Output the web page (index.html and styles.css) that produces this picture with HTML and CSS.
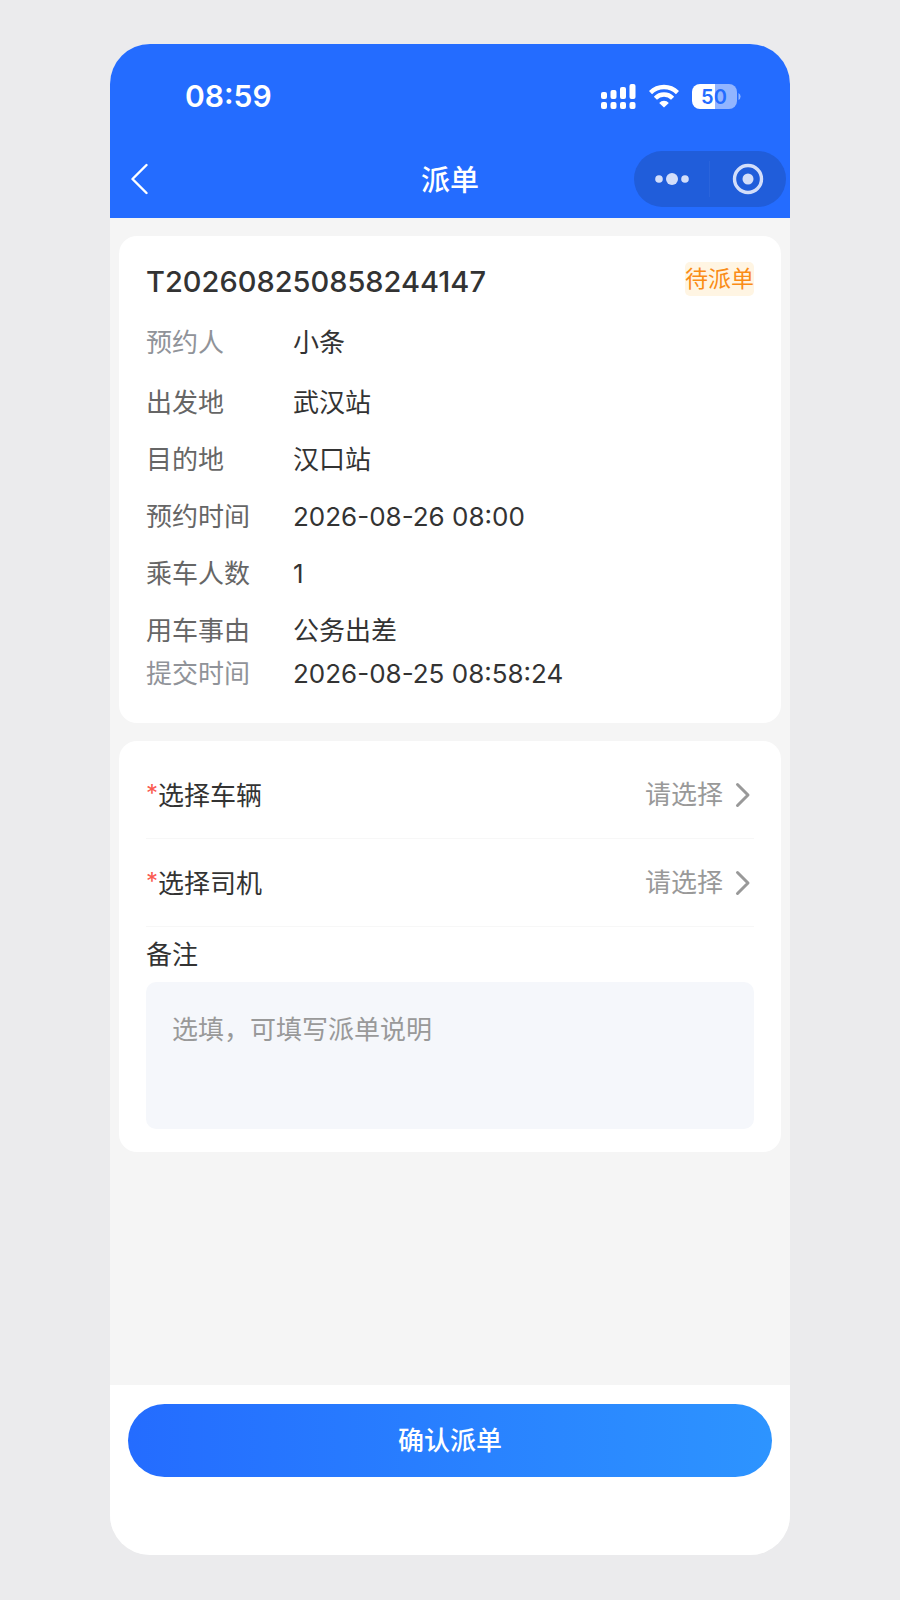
FILE: index.html
```html
<!doctype html>
<html lang="zh-CN">
<head>
  <meta charset="UTF-8">
  <title>派单</title>
  <meta name="viewport" content="width=device-width, initial-scale=1.0">
  <link rel="stylesheet" href="styles.css">
</head>
<body>

  <div class="phone">
    <header class="header">
      <div class="status-bar">
        <span class="time">08:59</span>
        <div class="status-icons">
          <svg width="35" height="25" viewBox="0 0 35 25" fill="#fff" aria-hidden="true">
            <rect x="0" y="8" width="6" height="7" rx="2"/>
            <rect x="9.5" y="6" width="6" height="9" rx="2"/>
            <rect x="19" y="3" width="6" height="12" rx="2"/>
            <rect x="28.5" y="0" width="6" height="15" rx="2"/>
            <rect x="0" y="18" width="6" height="7" rx="2"/>
            <rect x="9.5" y="18" width="6" height="7" rx="2"/>
            <rect x="19" y="18" width="6" height="7" rx="2"/>
            <rect x="28.5" y="18" width="6" height="7" rx="2"/>
          </svg>
          <svg width="30" height="24" viewBox="0 0 30 24" aria-hidden="true">
            <g fill="none" stroke="#fff" stroke-width="4.4">
              <path d="M1.5 8.6A19.2 19.2 0 0 1 28.5 8.6"/>
              <path d="M6.4 14.2A12 12 0 0 1 23.6 14.2"/>
            </g>
            <path d="M15 23.5l-4.8-4.6a6.6 6.6 0 0 1 9.6 0z" fill="#fff"/>
          </svg>
          <svg width="50" height="25" viewBox="0 0 50 25" aria-hidden="true">
            <path d="M8 0h15v25H8a8 8 0 0 1-8-8V8a8 8 0 0 1 8-8z" fill="#fff"/>
            <path d="M23 0h14a8 8 0 0 1 8 8v9a8 8 0 0 1-8 8H23z" fill="#92b5ff"/>
            <path d="M46.5 9a4 4 0 0 1 0 7z" fill="#92b5ff"/>
            <text class="battery-text" x="22" y="20" text-anchor="middle">50</text>
          </svg>
        </div>
      </div>
      <div class="nav-bar">
        <button class="back" type="button" aria-label="返回">
          <svg width="18" height="32" viewBox="0 0 18 32" fill="none" stroke="#fff" stroke-width="2.4" stroke-linecap="round" stroke-linejoin="round">
            <path d="M15.500 2L1.500 16l14 14"/>
          </svg>
        </button>
        <h1>派单</h1>
        <div class="capsule">
          <button type="button" aria-label="更多">
            <svg width="34" height="14" viewBox="0 0 34 14" fill="#d3defa">
              <circle cx="4" cy="7" r="3.8"/>
              <circle cx="17" cy="7" r="6"/>
              <circle cx="30" cy="7" r="3.8"/>
            </svg>
          </button>
          <button type="button" aria-label="关闭">
            <svg width="32" height="32" viewBox="0 0 32 32">
              <circle cx="16" cy="16" r="13.5" fill="none" stroke="#d3defa" stroke-width="3.4"/>
              <circle cx="16" cy="16" r="5.5" fill="#d3defa"/>
            </svg>
          </button>
        </div>
      </div>
    </header>

    <main class="content">
      <section class="card order">
        <div class="order-head">
          <h2>T202608250858244147</h2>
          <span class="tag">待派单</span>
        </div>
        <dl class="info">
          <div class="meta"><dt>预约人</dt><dd>小条</dd></div>
          <div class="row"><dt>出发地</dt><dd>武汉站</dd></div>
          <div class="row"><dt>目的地</dt><dd>汉口站</dd></div>
          <div class="row"><dt>预约时间</dt><dd>2026-08-26 08:00</dd></div>
          <div class="row"><dt>乘车人数</dt><dd>1</dd></div>
          <div class="row"><dt>用车事由</dt><dd>公务出差</dd></div>
          <div class="meta"><dt>提交时间</dt><dd>2026-08-25 08:58:24</dd></div>
        </dl>
      </section>

      <form class="card form" id="dispatch">
        <div class="field">
          <label for="car"><span class="required">*</span>选择车辆</label>
          <select id="car"><option>请选择</option></select>
          <svg class="arrow" width="16" height="26" viewBox="0 0 16 26" aria-hidden="true"><path d="M2.500 2.500L13 13 2.500 23.500"/></svg>
        </div>
        <div class="field">
          <label for="driver"><span class="required">*</span>选择司机</label>
          <select id="driver"><option>请选择</option></select>
          <svg class="arrow" width="16" height="26" viewBox="0 0 16 26" aria-hidden="true"><path d="M2.500 2.500L13 13 2.500 23.500"/></svg>
        </div>
        <label class="remark-label" for="remark">备注</label>
        <textarea id="remark" placeholder="选填，可填写派单说明"></textarea>
      </form>
    </main>

    <footer class="footer">
      <button class="submit" type="submit" form="dispatch">确认派单</button>
    </footer>
  </div>

</body>
</html>
```
FILE: styles.css
```css
* {
  box-sizing: border-box;
}
body {
  display: flex;
  min-height: 100vh;
  margin: 0;
  padding: 44px 110px 45px;
  background: #ebebed;
  color: #333;
  font-family: Inter, "Noto Sans CJK SC", sans-serif;
  font-size: 26px;
  line-height: 36px;
}
h1, h2, dl, dd {
  margin: 0;
}
button, select, textarea {
  margin: 0;
  padding: 0;
  border: 0;
  background: none;
  font: inherit;
}
svg {
  display: block;
}

.phone {
  display: flex;
  flex: 1;
  flex-direction: column;
  min-width: 0;
  border-radius: 40px;
  background: #f5f5f5;
  overflow: hidden;
}

/* header */
.header {
  background: #246cff;
  color: #fff;
}
.status-bar {
  display: flex;
  justify-content: space-between;
  align-items: center;
  height: 104px;
  padding: 0 48px 0 75px;
}
.time {
  font-size: 30px;
  font-weight: 600;
}
.status-icons {
  display: flex;
  align-items: center;
  gap: 13px;
}
.battery-text {
  fill: #246cff;
  font-size: 20px;
  font-weight: 600;
}
.nav-bar {
  display: grid;
  grid-template-columns: 1fr auto 1fr;
  align-items: center;
  height: 70px;
  padding: 0 4px 8px;
}
.nav-bar h1 {
  padding-top: 4px;
  font-size: 29px;
  font-weight: 500;
}
.back {
  justify-self: start;
  margin-left: 17px;
}
.capsule {
  display: grid;
  grid-template-columns: 1fr 1fr;
  justify-self: end;
  align-items: center;
  width: 152px;
  height: 56px;
  border-radius: 28px;
  background: #205dda;
}
.capsule button {
  display: flex;
  justify-content: center;
  align-items: center;
  height: 36px;
}
.capsule button:first-child {
  border-right: 1px solid #2a64dc;
}

/* cards */
.content {
  display: flex;
  flex: 1;
  flex-direction: column;
  gap: 18px;
  padding: 18px 9px;
}
.card {
  border-radius: 18px;
  background: #fff;
}
.order {
  padding: 26px 27px 31px;
}
.order-head {
  display: flex;
  justify-content: space-between;
  align-items: flex-start;
  margin-bottom: 23px;
}
.order-head h2 {
  font-size: 29px;
  font-weight: 500;
  line-height: 40px;
}
.tag {
  border-radius: 5px;
  background: #fff5e3;
  color: #fa8c16;
  font-size: 23px;
  line-height: 34px;
}
.info div {
  display: grid;
  grid-template-columns: 147px 1fr;
}
.info .row {
  padding: 10px 0 11px;
}
.info .row dt {
  color: #666;
}
.info .meta dt {
  color: #909399;
}
.info .meta:first-child {
  margin-bottom: 14px;
}
.info .meta:last-child {
  margin-top: -4px;
}

/* form */
.form {
  display: flex;
  flex-direction: column;
  padding: 10px 27px 23px;
}
.field {
  display: flex;
  align-items: center;
  gap: 12px;
  height: 88px;
  border-bottom: 1px solid #f7f7f7;
}
.field label {
  padding-top: 3px;
}
.field select {
  flex: 1;
  min-width: 0;
  appearance: none;
  color: #999;
  text-align-last: right;
}
.required {
  color: #fa5a50;
  font-size: 24px;
  line-height: 1;
  vertical-align: 3px;
}
.arrow {
  margin-right: 3px;
  fill: none;
  stroke: #999;
  stroke-width: 3;
  stroke-linecap: round;
  stroke-linejoin: round;
}
.remark-label {
  margin: 10px 0 9px;
}
textarea {
  display: block;
  width: 100%;
  height: 147px;
  padding: 30px 26px;
  border-radius: 10px;
  background: #f5f7fb;
  color: #333;
  resize: none;
}
textarea::placeholder {
  color: #999;
}

/* footer */
.footer {
  padding: 19px 18px 78px;
  background: #fff;
}
.submit {
  display: block;
  width: 100%;
  height: 73px;
  border-radius: 37px;
  background: linear-gradient(90deg, #246cff, #2d94ff);
  color: #fff;
  font-weight: 500;
}
```
